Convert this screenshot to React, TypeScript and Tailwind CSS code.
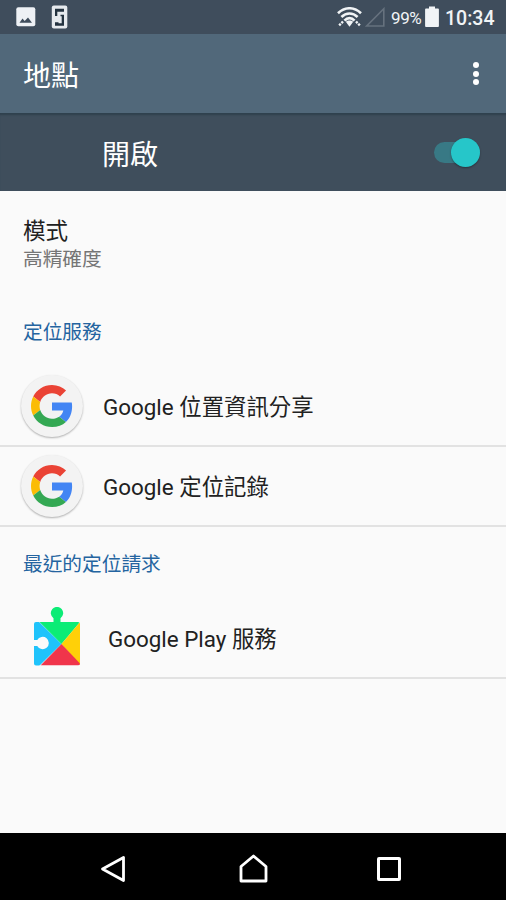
import type { ReactNode } from "react";

const SERVICES = ["Google 位置資訊分享", "Google 定位記錄"];

function StatusBar() {
  return (
    <div className="flex h-[34px] items-center bg-[#3f4d5c] text-[#f1f4f6]">
      <svg className="ml-4" width="20" height="20" viewBox="0 0 20 20">
        <rect x="0.3" y="0.3" width="19" height="19" rx="2" fill="#eef1f5" />
        <path d="M3.5 15.7 6.500 11.500l2.200 2.500 3.300-3.500 4 5.200z" fill="#3f4d5c" />
      </svg>
      <svg className="ml-[15px]" width="17" height="24" viewBox="0 0 17 24">
        <rect x="0.8" y="0.5" width="15.5" height="23" rx="2" fill="#e6eaee" />
        <path d="M4 3.700h9v3H6.300v4.300H4z" fill="#23323f" />
        <path d="M4 17.300h3.500v1H10.700v-7H9.500v-1.500H13v10.900H4z" fill="#23323f" />
      </svg>
      <svg className="ml-[269px]" width="25" height="20" viewBox="0 0 25 20" fill="none" stroke="currentColor">
        <path d="M1 6.3C7.8-.4 17.2-.4 24 6.3" strokeWidth="2.6" />
        <path d="M4.4 10C9.2 5.3 15.8 5.3 20.6 10" strokeWidth="2.6" />
        <path d="M7.500 13.600C10.400 10.400 14.600 10.400 17.500 13.600" strokeWidth="2.7" />
        <path d="M8.800 14.800c2-1.700 5.400-1.700 7.400 0l-3.700 5z" fill="currentColor" stroke="none" />
        <path d="m6 14.500-4 4M19 14.500l4 4" strokeWidth="2.4" strokeDasharray="2.200 1" />
      </svg>
      <svg className="ml-[3px]" width="20" height="20" viewBox="0 0 20 20">
        <path d="M1.7 19H18.8V1.8z" fill="none" stroke="#66727e" strokeWidth="1.6" />
      </svg>
      <span className="ml-[6px] w-[31px] pt-0.5 whitespace-nowrap text-[17px] leading-none tracking-[-0.4px]">99%</span>
      <svg className="ml-[3px]" width="14" height="22" viewBox="0 0 14 22" fill="currentColor">
        <path d="M4 .5h6v2h3q.9 0 .9 1V20q0 1-.9 1H1q-.9 0-.9-1V3.500q0-1 .9-1h3z" />
      </svg>
      <span className="ml-[6px] pt-[3px] whitespace-nowrap text-[19.5px] leading-none font-medium">10:34</span>
    </div>
  );
}

function GoogleIcon() {
  return (
    <div className="flex size-[62px] items-center justify-center rounded-full bg-[#f3f3f3] shadow-[0_1px_2px_rgba(0,0,0,0.3)]">
      <svg className="-ml-px" width="42" height="42" viewBox="0 0 48 48">
        <path fill="#ea4335" d="M24 9.500c3.540 0 6.710 1.220 9.210 3.600l6.850-6.850C35.900 2.380 30.470 0 24 0 14.620 0 6.510 5.380 2.560 13.220l7.980 6.190C12.430 13.720 17.740 9.500 24 9.500z" />
        <path fill="#4285f4" d="M46.980 24.550c0-1.570-.15-3.090-.38-4.550H24v9.020h12.940c-.58 2.960-2.260 5.480-4.780 7.180l7.730 6c4.510-4.180 7.090-10.360 7.090-17.650z" />
        <path fill="#fbbc05" d="M10.530 28.590c-.48-1.450-.76-2.990-.76-4.590s.27-3.140.76-4.590l-7.980-6.190C.92 16.460 0 20.120 0 24c0 3.880.92 7.540 2.560 10.780l7.970-6.190z" />
        <path fill="#34a853" d="M24 48c6.480 0 11.930-2.130 15.890-5.810l-7.730-6c-2.150 1.450-4.920 2.300-8.160 2.300-6.260 0-11.570-4.220-13.470-9.910l-7.980 6.190C6.510 42.620 14.620 48 24 48z" />
      </svg>
    </div>
  );
}

function PlayServicesIcon() {
  return (
    <svg className="-mt-[2px]" width="46" height="60" viewBox="0 0 46 60">
      <defs>
        <clipPath id="puzzle">
          <path d="M2 15H19.500V11.200A6.200 6.200 0 1 1 26.500 11.200V15H44q2 0 2 2V56.500q0 2-2 2H2q-2 0-2-2V39H3.200A6.200 6.200 0 1 0 3.200 33H0V17q0-2 2-2z" />
        </clipPath>
      </defs>
      <g clipPath="url(#puzzle)">
        <path d="M0 10 27.500 37 0 64z" fill="#1fc3fb" />
        <path d="M5.500 15V0H42v15h4L27.500 37z" fill="#0cec76" />
        <path d="M46 15v43L27.500 37z" fill="#ffd008" />
        <path d="M6.500 58.500 27.500 37 48 58.500z" fill="#f0354b" />
      </g>
    </svg>
  );
}

function SectionTitle({ children }: { children: ReactNode }) {
  return <h2 className="pl-[23px] text-[19.7px] leading-6 text-[#2464a0]">{children}</h2>;
}

export default function App() {
  return (
    <div className="flex h-[900px] w-[506px] flex-col overflow-hidden bg-[#fafafa] font-[Roboto,'Noto_Sans_CJK_TC',sans-serif] text-[#212121]">
      <StatusBar />

      <header className="flex h-[79px] items-center justify-between bg-[#51687a] pr-[27px] pl-[23px] text-white">
        <h1 className="pt-[7px] text-[28px] leading-8">地點</h1>
        <div className="flex flex-col gap-[2.500px]">
          <i className="size-[6px] rounded-full bg-white" />
          <i className="size-[6px] rounded-full bg-white" />
          <i className="size-[6px] rounded-full bg-white" />
        </div>
      </header>

      <div className="flex h-[78px] items-center justify-between bg-[#3f4e5c] pr-[26px] pl-[102px] text-white shadow-[inset_0_3px_2px_-1px_#2f414d]">
        <span className="pt-[7px] text-[28px] leading-8">開啟</span>
        <div className="flex h-[21px] w-[46px] items-center justify-end rounded-full bg-[#387985]">
          <div className="size-[29px] shrink-0 rounded-full bg-[#26c6c9] shadow-[0_1px_2px_rgba(0,0,0,0.35)]" />
        </div>
      </div>

      <main className="flex flex-1 flex-col">
        <div className="h-[130px] pt-[25px] pl-[23px]">
          <div className="text-[22.500px] leading-[30px]">模式</div>
          <div className="text-[19.700px] leading-[28px] text-[#757575]">高精確度</div>
        </div>

        <SectionTitle>定位服務</SectionTitle>
        <div className="mt-[22px]">
          {SERVICES.map((name) => (
            <div key={name} className="flex h-[80px] items-center gap-[20px] border-b-2 border-[#e2e2e2] pl-[21px]">
              <GoogleIcon />
              <span className="pt-1 text-[22.400px]">{name}</span>
            </div>
          ))}
        </div>

        <div className="pt-[26px]">
          <SectionTitle>最近的定位請求</SectionTitle>
        </div>
        <div className="mt-[22px] flex h-[80px] items-center gap-[28px] border-b-2 border-[#e2e2e2] pl-[34px]">
          <PlayServicesIcon />
          <span className="pt-1 text-[22.400px]">Google Play 服務</span>
        </div>
      </main>

      <nav className="flex h-[67px] items-center bg-black pt-[4px] text-white">
        <svg className="ml-[100px]" width="26" height="28" viewBox="0 0 26 28" fill="none" stroke="currentColor" strokeWidth="2.800">
          <path d="M2.500 14 23.500 2.500v23z" strokeLinejoin="round" />
        </svg>
        <svg className="ml-[112px]" width="31" height="30" viewBox="0 0 31 30" fill="none" stroke="currentColor" strokeWidth="2.800">
          <path d="M3 12.500 15.500 2 28 12.500V27H3z" strokeLinejoin="round" />
        </svg>
        <div className="ml-[108px] size-[24px] rounded-xs border-3 border-white" />
      </nav>
    </div>
  );
}
